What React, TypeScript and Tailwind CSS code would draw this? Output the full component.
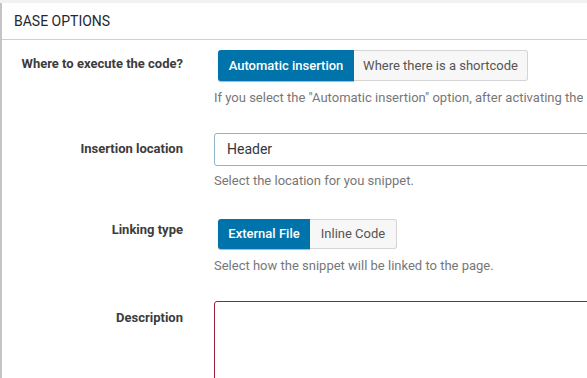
import React from "react";

const font = { fontFamily: "Roboto, 'Noto Sans', sans-serif" };

function Label({ children, pt }: { children: React.ReactNode; pt: string }) {
  return (
    <div className={`w-[181px] shrink-0 text-right text-[13px] font-bold leading-[16px] text-[#3c3c3c] ${pt}`}>
      {children}
    </div>
  );
}

function Help({ children, mt = "mt-[9px]" }: { children: React.ReactNode; mt?: string }) {
  return <div className={`${mt} whitespace-nowrap text-[13px] leading-[16px] text-[#777]`}>{children}</div>;
}

function Toggle({ a, b, aw, bw, h }: { a: string; b: string; aw: string; bw: string; h: string }) {
  return (
    <div className={`ml-[4px] flex ${h} text-[13px]`}>
      <div className={`${aw} flex items-center justify-center rounded-l-[3px] bg-[#0073aa] font-medium text-white shadow-[0_1px_1px_rgba(0,0,0,0.3)]`}>
        {a}
      </div>
      <div className={`${bw} flex items-center justify-center rounded-r-[3px] border border-l-0 border-[#d4d4d4] bg-[#f7f7f7] text-[#555]`}>
        {b}
      </div>
    </div>
  );
}

export default function App() {
  return (
    <div className="h-[378px] w-[587px] overflow-hidden bg-[#f1f1f1] pt-[3px]" style={font}>
      <div className="h-[375px] overflow-hidden border-l-2 border-[#c4c4c4] bg-white">
        <div className="flex h-[37px] items-center border-b border-[#cfcfcf] pl-[12px] text-[14px] text-[#23282d]">
          BASE OPTIONS
        </div>
        <div className="pt-[10px]">
          {/* Row 1 */}
          <div className="flex">
            <Label pt="pt-[6px]">Where to execute the code?</Label>
            <div className="ml-[31px] flex min-w-0 flex-col overflow-hidden">
              <Toggle a="Automatic insertion" b="Where there is a shortcode" aw="w-[136px]" bw="w-[174px]" h="h-[31px]" />
              <Help>If you select the "Automatic insertion" option, after activating the</Help>
            </div>
          </div>
          {/* Row 2 */}
          <div className="mt-[27px] flex">
            <Label pt="pt-[8px]">Insertion location</Label>
            <div className="ml-[31px] flex flex-col">
              <div className="flex h-[33px] w-[420px] items-center rounded-[3px] border border-[#8fb3c9] pl-[12px] text-[14px] text-[#32373c]">
                Header
              </div>
              <Help mt="mt-[7px]">Select the location for you snippet.</Help>
            </div>
          </div>
          {/* Row 3 */}
          <div className="mt-[30px] flex">
            <Label pt="pt-[3px]">Linking type</Label>
            <div className="ml-[31px] flex flex-col">
              <Toggle a="External File" b="Inline Code" aw="w-[92px]" bw="w-[87px]" h="h-[30px]" />
              <Help>Select how the snippet will be linked to the page.</Help>
            </div>
          </div>
          {/* Row 4 */}
          <div className="mt-[27px] flex">
            <Label pt="pt-[9px]">Description</Label>
            <div className="ml-[31px]">
              <div className="h-[120px] w-[420px] rounded-[3px] border border-[#9b1f3a]" />
            </div>
          </div>
        </div>
      </div>
    </div>
  );
}
